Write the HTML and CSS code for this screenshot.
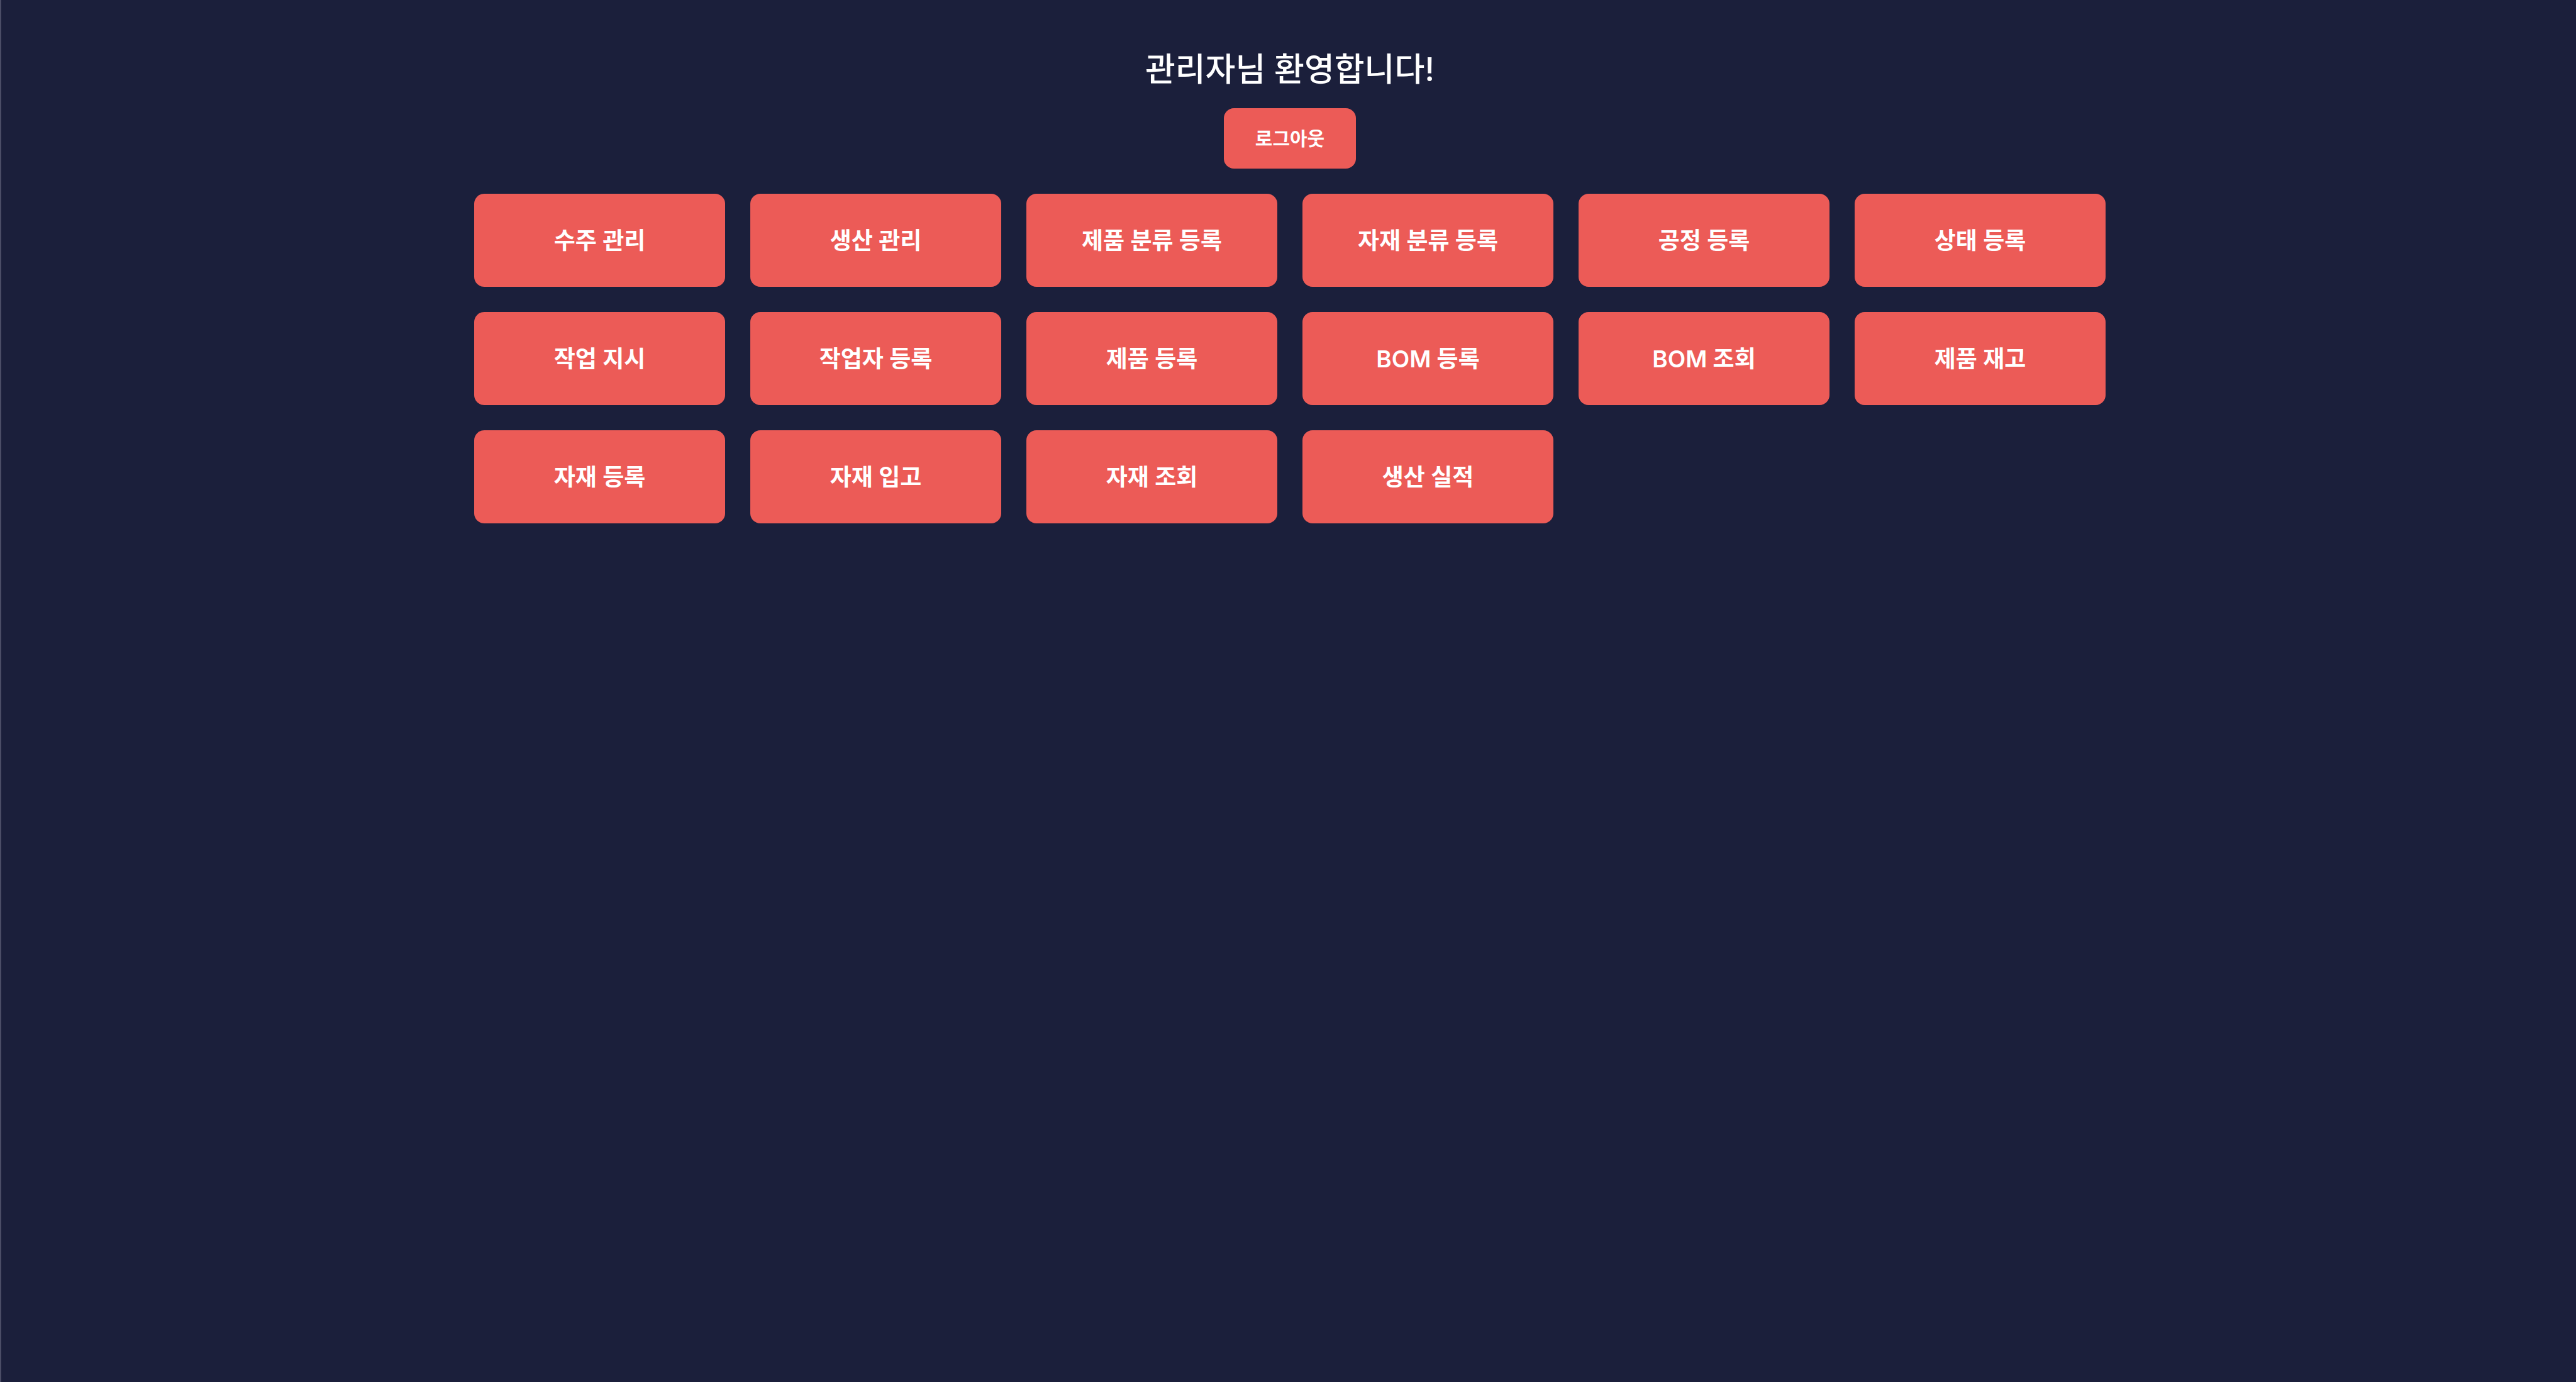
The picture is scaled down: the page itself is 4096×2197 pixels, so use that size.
FILE: index.html
```html
<!DOCTYPE html>
<html lang="ko">
<head>
  <meta charset="utf-8">
  <meta name="viewport" content="width=device-width, initial-scale=1">
  <title>관리자</title>
  <link rel="stylesheet" href="styles.css">
</head>
<body class="page">
  <header class="header">
    <h1 class="greeting">관리자님 환영합니다!</h1>
    <button class="button logout" type="button">로그아웃</button>
  </header>
  <main class="menu">
    <button class="button menu-item" type="button">수주 관리</button>
    <button class="button menu-item" type="button">생산 관리</button>
    <button class="button menu-item" type="button">제품 분류 등록</button>
    <button class="button menu-item" type="button">자재 분류 등록</button>
    <button class="button menu-item" type="button">공정 등록</button>
    <button class="button menu-item" type="button">상태 등록</button>
    <button class="button menu-item" type="button">작업 지시</button>
    <button class="button menu-item" type="button">작업자 등록</button>
    <button class="button menu-item" type="button">제품 등록</button>
    <button class="button menu-item" type="button">BOM 등록</button>
    <button class="button menu-item" type="button">BOM 조회</button>
    <button class="button menu-item" type="button">제품 재고</button>
    <button class="button menu-item" type="button">자재 등록</button>
    <button class="button menu-item" type="button">자재 입고</button>
    <button class="button menu-item" type="button">자재 조회</button>
    <button class="button menu-item" type="button">생산 실적</button>
  </main>
</body>
</html>
```
FILE: styles.css
```css
* {
  box-sizing: border-box;
}

.page {
  min-height: 100vh;
  margin: 0;
  padding: 75px 0 40px 4px;
  border-left: 2px solid #4b4d66;
  background: #1b1f3b;
  color: #fff;
  font-family: Inter, "Noto Sans CJK KR", sans-serif;
}

.header {
  display: flex;
  flex-direction: column;
  align-items: center;
  gap: 25px;
}

.greeting {
  margin: 0;
  font-size: 52px;
  font-weight: 500;
  line-height: 72px;
}

.button {
  border: 0;
  border-radius: 16px;
  background: #ec5b57;
  color: inherit;
  font-family: inherit;
  font-weight: 600;
  cursor: pointer;
}

.logout {
  padding: 28px 50px;
  font-size: 30px;
  line-height: 40px;
}

.menu {
  display: grid;
  grid-template-columns: repeat(auto-fill, 399px);
  gap: 40px;
  width: 100%;
  max-width: 2594px;
  margin: 40px auto 0;
}

.menu-item {
  padding: 51px 40px 49px;
  font-size: 37px;
  line-height: 48px;
}
```
